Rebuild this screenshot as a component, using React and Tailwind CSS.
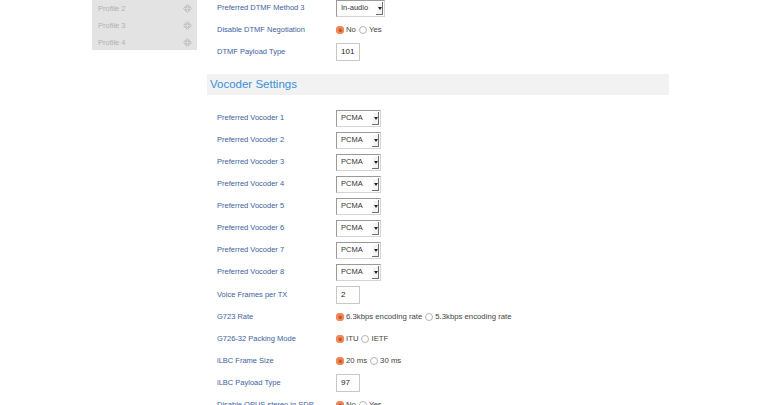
import React from 'react'

const font = "font-['Liberation_Sans',Arial,sans-serif]"

function Move() {
  return (
    <svg width="9" height="9" viewBox="0 0 10 10" className="text-[#b9b9b9]">
      <path d="M5 0.5 L7 2.5 H5.8 V4.2 H7.5 V3 L9.5 5 L7.5 7 V5.8 H5.8 V7.5 H7 L5 9.5 L3 7.5 H4.2 V5.8 H2.5 V7 L0.5 5 L2.5 3 V4.2 H4.2 V2.5 H3 Z" fill="none" stroke="currentColor" strokeWidth="0.9" />
    </svg>
  )
}

function Select({ value, wide }) {
  return (
    <div className={`flex h-[17px] ${wide ? 'w-[49px]' : 'w-[45px]'} items-stretch border border-[#9a9a9a] border-r-[#d4d4d4] border-b-[#d4d4d4] bg-white`}>
      <div className="flex flex-1 items-center pl-[4px] text-[7.5px] text-[#333]">{value}</div>
      <div className="my-[1px] mr-[1px] flex w-[7px] items-center justify-center bg-[#f4f4f4] shadow-[inset_-1px_-1px_0_#6f6f6f,inset_1px_1px_0_#ffffff]">
        <div className="h-0 w-0 border-x-[2px] border-t-[3px] border-x-transparent border-t-[#222]" />
      </div>
    </div>
  )
}

function Input({ value }) {
  return (
    <div className="flex h-[18px] w-[24px] items-center border border-[#c8c8c8] pl-[4px] text-[8px] text-[#222]">{value}</div>
  )
}

function Radio({ on }) {
  return on ? (
    <span className="inline-block h-[8px] w-[8px] rounded-full bg-[#e4703f] shadow-[inset_0_0_0_2px_#f08a5d]">
      <span className="m-[2.5px] block h-[3px] w-[3px] rounded-full bg-[#c9532a]" />
    </span>
  ) : (
    <span className="inline-block h-[8px] w-[8px] rounded-full border border-[#b4b4b4] bg-white" />
  )
}

function Radios({ a, b }) {
  return (
    <div className="flex items-center text-[7.75px] text-[#444]">
      <Radio on />
      <span className="ml-[2px] mr-[3px]">{a}</span>
      <Radio />
      <span className="ml-[2px]">{b}</span>
    </div>
  )
}

function Row({ label, children }) {
  return (
    <div className="flex h-[22px] items-center">
      <div className="w-[129px] pl-[10px] text-[7.5px] text-[#3d62a0]">{label}</div>
      {children}
    </div>
  )
}

export default function App() {
  const vocoders = [1, 2, 3, 4, 5, 6, 7, 8]
  return (
    <div className={`h-[405px] w-[760px] overflow-hidden bg-white ${font}`}>
      <div className="flex">
        <aside className="ml-[92px] h-[50px] w-[105px] bg-[#e3e3e3]">
          {['Profile 2', 'Profile 3', 'Profile 4'].map((p) => (
            <div key={p} className="flex h-[17px] items-center justify-between pl-[6px] pr-[5px] text-[7.5px] text-[#b2b2b2]">
              <span>{p}</span>
              <Move />
            </div>
          ))}
        </aside>
        <main className="ml-[10px] mt-[-3px] w-[462px]">
          <Row label="Preferred DTMF Method 3">
            <Select value="In-audio" wide />
          </Row>
          <Row label="Disable DTMF Negotiation">
            <Radios a="No" b="Yes" />
          </Row>
          <Row label="DTMF Payload Type">
            <Input value="101" />
          </Row>

          <div className="mb-[12px] mt-[11px] flex h-[21px] items-center bg-[#f2f2f2] pl-[3px] text-[11.5px] text-[#3b8fd6]">
            Vocoder Settings
          </div>

          {vocoders.map((n) => (
            <Row key={n} label={`Preferred Vocoder ${n}`}>
              <Select value="PCMA" />
            </Row>
          ))}
          <div className="h-[1px]" />
          <Row label="Voice Frames per TX">
            <Input value="2" />
          </Row>
          <Row label="G723 Rate">
            <Radios a="6.3kbps encoding rate" b="5.3kbps encoding rate" />
          </Row>
          <Row label="G726-32 Packing Mode">
            <Radios a="ITU" b="IETF" />
          </Row>
          <Row label="iLBC Frame Size">
            <Radios a="20 ms" b="30 ms" />
          </Row>
          <Row label="iLBC Payload Type">
            <Input value="97" />
          </Row>
          <Row label="Disable OPUS stereo in SDP">
            <Radios a="No" b="Yes" />
          </Row>
        </main>
      </div>
    </div>
  )
}
